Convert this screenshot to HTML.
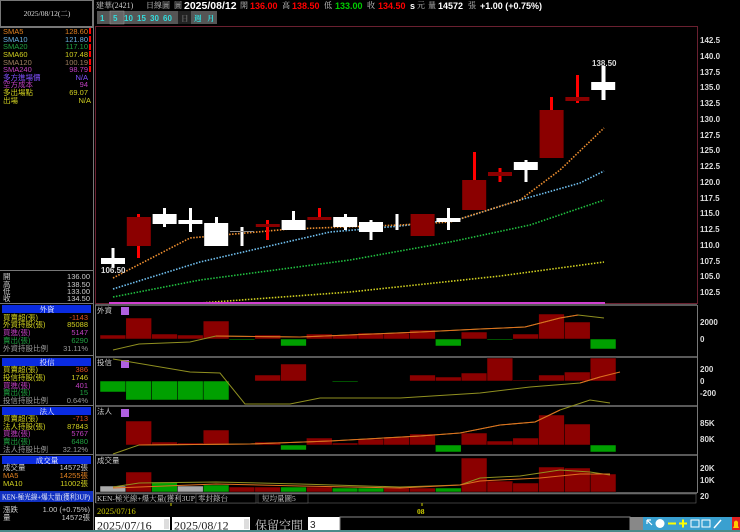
<!DOCTYPE html>
<html><head><meta charset="utf-8"><style>
body{margin:0;background:#000;width:740px;height:532px;overflow:hidden}
svg{display:block}
text{font-family:"Liberation Sans","Noto Sans CJK TC",sans-serif}
.s{font-size:7.5px;font-family:"Liberation Serif","Noto Serif CJK SC",serif}
.ax{font-size:8px;fill:#ddd;font-weight:bold}
</style></head><body>
<svg width="740" height="532" viewBox="0 0 740 532" xmlns="http://www.w3.org/2000/svg">
<rect width="740" height="532" fill="#000"/>
<!-- left panel -->
<rect x="0.5" y="0.5" width="92" height="26" fill="#000" stroke="#777"/>
<text x="47" y="16" class="s" fill="#ddd" text-anchor="middle">2025/08/12(二)</text>
<line x1="93.5" y1="0" x2="93.5" y2="532" stroke="#777"/>
<line x1="0" y1="27.5" x2="93" y2="27.5" stroke="#777"/>
<g class="s">
<text x="3" y="34" fill="#e08020">SMA5</text><text x="88" y="34" fill="#e08020" text-anchor="end">128.60</text>
<text x="3" y="42" fill="#6ab0e0">SMA10</text><text x="88" y="42" fill="#6ab0e0" text-anchor="end">121.80</text>
<text x="3" y="49" fill="#20a040">SMA20</text><text x="88" y="49" fill="#20a040" text-anchor="end">117.10</text>
<text x="3" y="57" fill="#d0d020">SMA60</text><text x="88" y="57" fill="#d0d020" text-anchor="end">107.48</text>
<text x="3" y="65" fill="#a08060">SMA120</text><text x="88" y="65" fill="#a08060" text-anchor="end">100.19</text>
<text x="3" y="72" fill="#c040c0">SMA240</text><text x="88" y="72" fill="#c040c0" text-anchor="end">98.79</text>
<text x="3" y="80" fill="#8050ff">多方進場價</text><text x="88" y="80" fill="#8050ff" text-anchor="end">N/A</text>
<text x="3" y="87" fill="#c040c0">空方成本</text><text x="88" y="87" fill="#c040c0" text-anchor="end">94</text>
<text x="3" y="95" fill="#d0d020">多出場點</text><text x="88" y="95" fill="#d0d020" text-anchor="end">69.07</text>
<text x="3" y="103" fill="#d0d020">出場</text><text x="91" y="103" fill="#d0d020" text-anchor="end">N/A</text>
</g>
<g fill="#f00"><rect x="89" y="28" width="2" height="6"/><rect x="89" y="36" width="2" height="6"/><rect x="89" y="44" width="2" height="6"/><rect x="89" y="51" width="2" height="6"/><rect x="89" y="59" width="2" height="6"/><rect x="89" y="66" width="2" height="6"/></g>
<line x1="0" y1="270.5" x2="93" y2="270.5" stroke="#777"/>
<g class="s" fill="#ccc">
<text x="3" y="279">開</text><text x="90" y="279" text-anchor="end">136.00</text>
<text x="3" y="287">高</text><text x="90" y="287" text-anchor="end">138.50</text>
<text x="3" y="294">低</text><text x="90" y="294" text-anchor="end">133.00</text>
<text x="3" y="301">收</text><text x="90" y="301" text-anchor="end">134.50</text>
</g>
<line x1="0" y1="303.5" x2="93" y2="303.5" stroke="#777"/>
<rect x="2" y="305" width="89" height="8" fill="#0a2be0"/><text x="47" y="312" class="s" fill="#fff" text-anchor="middle">外資</text>
<g class="s">
<text x="3" y="320" fill="#d0d020">買賣超(張)</text><text x="88" y="320" fill="#e05020" text-anchor="end">-1143</text>
<text x="3" y="327" fill="#d0d020">外資持股(張)</text><text x="88" y="327" fill="#d0d020" text-anchor="end">85088</text>
<text x="3" y="335" fill="#c040c0">買進(張)</text><text x="88" y="335" fill="#c040c0" text-anchor="end">5147</text>
<text x="3" y="343" fill="#20a040">賣出(張)</text><text x="88" y="343" fill="#20a040" text-anchor="end">6290</text>
<text x="3" y="351" fill="#999">外資持股比例</text><text x="88" y="351" fill="#999" text-anchor="end">31.11%</text>
</g>
<line x1="0" y1="355.5" x2="93" y2="355.5" stroke="#777"/>
<rect x="2" y="358" width="89" height="8" fill="#0a2be0"/><text x="47" y="365" class="s" fill="#fff" text-anchor="middle">投信</text>
<g class="s">
<text x="3" y="372" fill="#d0d020">買賣超(張)</text><text x="88" y="372" fill="#e05020" text-anchor="end">386</text>
<text x="3" y="380" fill="#d0d020">投信持股(張)</text><text x="88" y="380" fill="#d0d020" text-anchor="end">1746</text>
<text x="3" y="388" fill="#c040c0">買進(張)</text><text x="88" y="388" fill="#c040c0" text-anchor="end">401</text>
<text x="3" y="395" fill="#20a040">賣出(張)</text><text x="88" y="395" fill="#20a040" text-anchor="end">15</text>
<text x="3" y="403" fill="#999">投信持股比例</text><text x="88" y="403" fill="#999" text-anchor="end">0.64%</text>
</g>
<line x1="0" y1="405.5" x2="93" y2="405.5" stroke="#777"/>
<rect x="2" y="407" width="89" height="8" fill="#0a2be0"/><text x="47" y="414" class="s" fill="#fff" text-anchor="middle">法人</text>
<g class="s">
<text x="3" y="421" fill="#d0d020">買賣超(張)</text><text x="88" y="421" fill="#e05020" text-anchor="end">-713</text>
<text x="3" y="429" fill="#d0d020">法人持股(張)</text><text x="88" y="429" fill="#d0d020" text-anchor="end">87843</text>
<text x="3" y="436" fill="#c040c0">買進(張)</text><text x="88" y="436" fill="#c040c0" text-anchor="end">5767</text>
<text x="3" y="444" fill="#20a040">賣出(張)</text><text x="88" y="444" fill="#20a040" text-anchor="end">6480</text>
<text x="3" y="452" fill="#999">法人持股比例</text><text x="88" y="452" fill="#999" text-anchor="end">32.12%</text>
</g>
<line x1="0" y1="454.5" x2="93" y2="454.5" stroke="#777"/>
<rect x="2" y="456" width="89" height="8" fill="#0a2be0"/><text x="47" y="463" class="s" fill="#fff" text-anchor="middle">成交量</text>
<g class="s">
<text x="3" y="470" fill="#ccc">成交量</text><text x="88" y="470" fill="#ccc" text-anchor="end">14572張</text>
<text x="3" y="478" fill="#e08020">MA5</text><text x="88" y="478" fill="#e08020" text-anchor="end">14255張</text>
<text x="3" y="486" fill="#d0d020">MA10</text><text x="88" y="486" fill="#d0d020" text-anchor="end">11002張</text>
</g>
<rect x="0" y="491" width="93" height="11" fill="#1030c0"/><text x="2" y="499.5" class="s" fill="#fff" textLength="88" lengthAdjust="spacingAndGlyphs">KEN-極光線+爆大量(獲利3UP)</text>
<g class="s" fill="#ccc"><text x="3" y="512">漲跌</text><text x="90" y="512" text-anchor="end">1.00 (+0.75%)</text>
<text x="3" y="520">量</text><text x="90" y="520" text-anchor="end">14572張</text></g>
<!-- header -->
<g style="font-size:9px">
<text x="96" y="8" fill="#ccc" class="s" style="font-size:8px">建華(2421)</text>
<text x="146" y="8" fill="#ccc" class="s" style="font-size:8px">日線圖</text>
<text x="174" y="8" fill="#ccc" class="s" style="font-size:8px">圖</text>
<text x="184" y="9" fill="#fff" font-weight="bold" style="font-size:10.5px">2025/08/12</text>
<text x="240" y="8" fill="#ccc" class="s" style="font-size:8px">開</text><text x="250" y="9" fill="#f00" font-weight="bold">136.00</text>
<text x="282" y="8" fill="#ccc" class="s" style="font-size:8px">高</text><text x="292" y="9" fill="#f00" font-weight="bold">138.50</text>
<text x="324" y="8" fill="#ccc" class="s" style="font-size:8px">低</text><text x="335" y="9" fill="#0c0" font-weight="bold">133.00</text>
<text x="367" y="8" fill="#ccc" class="s" style="font-size:8px">收</text><text x="378" y="9" fill="#f00" font-weight="bold">134.50</text>
<text x="410" y="9" fill="#fff" font-weight="bold">s</text><text x="417" y="8" fill="#ccc" class="s" style="font-size:8px">元</text>
<text x="428" y="8" fill="#ccc" class="s" style="font-size:8px">量</text><text x="438" y="9" fill="#fff" font-weight="bold">14572</text>
<text x="468" y="8" fill="#ccc" class="s" style="font-size:8px">張</text>
<text x="480" y="9" fill="#fff" font-weight="bold">+1.00 (+0.75%)</text>
</g>
<g font-size="8" font-weight="bold" fill="#3dd">
<rect x="97" y="11" width="120" height="13" fill="#555"/>
<rect x="110" y="11" width="14" height="13" fill="#666" stroke="#999" stroke-width="0.5"/>
<rect x="178" y="11" width="13" height="13" fill="#222"/>
<text x="100" y="21">1</text><text x="113" y="21">5</text><text x="124" y="21">10</text><text x="137" y="21">15</text><text x="150" y="21">30</text><text x="163" y="21">60</text>
<text x="181" y="21" fill="#666" class="s">日</text><text x="194" y="21" class="s">週</text><text x="207" y="21" class="s">月</text>
</g>
<rect x="95.5" y="26.5" width="602" height="277" fill="none" stroke="#6a2030"/>
<g class="ax">
<text x="700" y="43">142.5</text><text x="700" y="59">140.0</text><text x="700" y="75">137.5</text><text x="700" y="90">135.0</text><text x="700" y="106">132.5</text><text x="700" y="122">130.0</text><text x="700" y="138">127.5</text><text x="700" y="153">125.0</text><text x="700" y="169">122.5</text><text x="700" y="185">120.0</text><text x="700" y="201">117.5</text><text x="700" y="216">115.0</text><text x="700" y="232">112.5</text><text x="700" y="248">110.0</text><text x="700" y="264">107.5</text><text x="700" y="279">105.0</text><text x="700" y="295">102.5</text>
</g>
<g fill="none" stroke-width="1.6" stroke-dasharray="1.5 1.5">
<polyline stroke="#d0d020" points="200,303 350,292 500,276 604,262"/>
<polyline stroke="#20c040" points="113,297 200,280 350,260 450,242 530,225 604,200"/>
<polyline stroke="#70c0f0" points="113,289 200,262 330,232 400,226 460,219 520,200 580,183 604,171"/>
<polyline stroke="#f09030" points="113,278 190,238 290,229 400,225 450,222 520,200 560,170 604,128"/>
</g>
<rect x="109" y="302" width="496" height="2" fill="#d040d0"/>
<g>
<rect x="111.5" y="248" width="3" height="20" fill="#fff"/><rect x="101" y="258" width="24" height="6" fill="#fff"/>
<rect x="137" y="214" width="3" height="44" fill="#f00"/><rect x="126.8" y="217" width="24" height="29" fill="#8b0000"/>
<rect x="163" y="208" width="3" height="19" fill="#fff"/><rect x="152.6" y="214" width="24" height="10" fill="#fff"/>
<rect x="189" y="208" width="3" height="24" fill="#fff"/><rect x="178.4" y="220" width="24" height="4" fill="#fff"/>
<rect x="215" y="217" width="3" height="29" fill="#fff"/><rect x="204.2" y="223" width="24" height="23" fill="#fff"/>
<rect x="240.5" y="227" width="3" height="19" fill="#fff"/><rect x="230" y="231" width="24" height="1" fill="#888"/>
<rect x="266" y="220" width="3" height="20" fill="#f00"/><rect x="255.8" y="224" width="24" height="3" fill="#8b0000"/>
<rect x="292" y="211" width="3" height="19" fill="#fff"/><rect x="281.6" y="220" width="24" height="10" fill="#fff"/>
<rect x="318" y="208" width="3" height="10" fill="#f00"/><rect x="307.4" y="217" width="24" height="3" fill="#8b0000"/>
<rect x="344" y="214" width="3" height="16" fill="#fff"/><rect x="333.2" y="217" width="24" height="10" fill="#fff"/>
<rect x="369.5" y="220" width="3" height="20" fill="#fff"/><rect x="359" y="222" width="24" height="10" fill="#fff"/>
<rect x="395.5" y="214" width="3" height="16" fill="#fff"/>
<rect x="410.6" y="214" width="24" height="22" fill="#8b0000"/>
<rect x="447" y="208" width="3" height="22" fill="#fff"/><rect x="436.4" y="218" width="24" height="4" fill="#fff"/>
<rect x="473" y="152" width="3" height="58" fill="#f00"/><rect x="462.2" y="180" width="24" height="30" fill="#8b0000"/>
<rect x="498.5" y="168" width="3" height="14" fill="#f00"/><rect x="488" y="172" width="24" height="4" fill="#8b0000"/>
<rect x="524.5" y="160" width="3" height="22" fill="#fff"/><rect x="513.8" y="162" width="24" height="8" fill="#fff"/>
<rect x="550" y="97" width="3" height="61" fill="#f00"/><rect x="539.6" y="110" width="24" height="48" fill="#8b0000"/>
<rect x="576" y="75" width="3" height="28" fill="#f00"/><rect x="565.4" y="97" width="24" height="4" fill="#8b0000"/>
<rect x="601.5" y="66" width="4" height="34" fill="#fff"/><rect x="591.2" y="82" width="24" height="8" fill="#fff"/>
</g>
<text x="592" y="66" class="ax" fill="#fff">138.50</text>
<text x="101" y="273" class="ax" fill="#fff">106.50</text>
<g stroke="#777" stroke-width="1.5"><line x1="95" y1="305" x2="697" y2="305"/><line x1="95" y1="357" x2="697" y2="357"/><line x1="95" y1="406" x2="697" y2="406"/><line x1="95" y1="455" x2="697" y2="455"/><line x1="95" y1="493" x2="697" y2="493"/></g>
<line x1="95.5" y1="305" x2="95.5" y2="503" stroke="#777"/><line x1="697.5" y1="305" x2="697.5" y2="493" stroke="#777"/>
<g class="s" fill="#ccc"><text x="97" y="313">外資</text><text x="97" y="365">投信</text><text x="97" y="414">法人</text><text x="97" y="463">成交量</text></g>
<g fill="#b060e0"><rect x="121" y="307" width="8" height="8"/><rect x="121" y="360" width="8" height="8"/><rect x="121" y="409" width="8" height="8"/></g>
<g class="ax"><text x="700" y="325">2000</text><text x="700" y="342">0</text><text x="700" y="372">200</text><text x="700" y="384">0</text><text x="700" y="396">-200</text><text x="700" y="426">85K</text><text x="700" y="442">80K</text><text x="700" y="471">20K</text><text x="700" y="483">10K</text><text x="700" y="499">20</text></g>
<g stroke="#000" stroke-width="0.5">
<g fill="#8b0000"><rect x="100" y="335" width="25.8" height="4"/><rect x="125.8" y="318" width="25.8" height="21"/><rect x="151.6" y="334" width="25.8" height="5"/><rect x="177.4" y="335" width="25.8" height="4"/><rect x="203.2" y="321" width="25.8" height="18"/><rect x="254.8" y="335" width="25.8" height="4"/><rect x="306.4" y="334" width="25.8" height="5"/><rect x="332.2" y="335" width="25.8" height="4"/><rect x="358" y="333" width="25.8" height="6"/><rect x="383.8" y="333" width="25.8" height="6"/><rect x="409.6" y="330" width="25.8" height="9"/><rect x="461.2" y="332" width="25.8" height="7"/><rect x="512.8" y="334" width="25.8" height="5"/><rect x="538.6" y="314" width="25.8" height="25"/><rect x="564.4" y="322" width="25.8" height="17"/></g>
<g fill="#00a000"><rect x="229" y="339" width="25.8" height="1"/><rect x="280.6" y="339" width="25.8" height="7"/><rect x="435.4" y="339" width="25.8" height="7"/><rect x="487" y="339" width="25.8" height="1"/><rect x="590.2" y="339" width="25.8" height="10"/></g>
<g fill="#00a000"><rect x="100" y="381" width="25.8" height="11"/><rect x="125.8" y="381" width="25.8" height="19"/><rect x="151.6" y="381" width="25.8" height="19"/><rect x="177.4" y="381" width="25.8" height="19"/><rect x="203.2" y="381" width="25.8" height="19"/><rect x="332.2" y="381" width="25.8" height="1"/></g>
<g fill="#8b0000"><rect x="254.8" y="375" width="25.8" height="6"/><rect x="280.6" y="364" width="25.8" height="17"/><rect x="409.6" y="375" width="25.8" height="6"/><rect x="435.4" y="377" width="25.8" height="4"/><rect x="461.2" y="373" width="25.8" height="8"/><rect x="487" y="358" width="25.8" height="23"/><rect x="512.8" y="380" width="25.8" height="1"/><rect x="538.6" y="375" width="25.8" height="6"/><rect x="564.4" y="372" width="25.8" height="9"/><rect x="590.2" y="358" width="25.8" height="23"/></g>
<g fill="#8b0000"><rect x="125.8" y="421" width="25.8" height="24"/><rect x="151.6" y="442" width="25.8" height="3"/><rect x="177.4" y="443" width="25.8" height="2"/><rect x="203.2" y="430" width="25.8" height="15"/><rect x="254.8" y="442" width="25.8" height="3"/><rect x="306.4" y="438" width="25.8" height="7"/><rect x="332.2" y="443" width="25.8" height="2"/><rect x="358" y="439" width="25.8" height="6"/><rect x="383.8" y="437" width="25.8" height="8"/><rect x="409.6" y="434" width="25.8" height="11"/><rect x="461.2" y="433" width="25.8" height="12"/><rect x="487" y="441" width="25.8" height="4"/><rect x="512.8" y="438" width="25.8" height="7"/><rect x="538.6" y="415" width="25.8" height="30"/><rect x="564.4" y="424" width="25.8" height="21"/></g>
<g fill="#00a000"><rect x="280.6" y="445" width="25.8" height="5"/><rect x="435.4" y="445" width="25.8" height="7"/><rect x="590.2" y="445" width="25.8" height="7"/></g>
<g fill="#8b0000"><rect x="125.8" y="472" width="25.8" height="20"/><rect x="229" y="487" width="25.8" height="5"/><rect x="254.8" y="487" width="25.8" height="5"/><rect x="306.4" y="487" width="25.8" height="5"/><rect x="383.8" y="488" width="25.8" height="4"/><rect x="409.6" y="488" width="25.8" height="4"/><rect x="461.2" y="458" width="25.8" height="34"/><rect x="487" y="481" width="25.8" height="11"/><rect x="512.8" y="483" width="25.8" height="9"/><rect x="538.6" y="467" width="25.8" height="25"/><rect x="564.4" y="468" width="25.8" height="24"/><rect x="590.2" y="474" width="25.8" height="18"/></g>
<g fill="#00a000"><rect x="151.6" y="482" width="25.8" height="10"/><rect x="203.2" y="485" width="25.8" height="7"/><rect x="280.6" y="487" width="25.8" height="5"/><rect x="332.2" y="488" width="25.8" height="4"/><rect x="358" y="488" width="25.8" height="4"/><rect x="435.4" y="488" width="25.8" height="4"/></g>
<g fill="#aaa"><rect x="100" y="486" width="25.8" height="6"/><rect x="177.4" y="486" width="25.8" height="6"/></g>
</g>
<g fill="none" stroke-width="1">
<polyline stroke="#909020" points="113,350 139,344 190,342 216,336 300,337 420,332 480,329 525,327 560,318 578,315 604,318"/>
<polyline stroke="#e07020" points="216,336 300,337 420,332 480,329 525,327 560,318 578,315"/>
<polyline stroke="#909020" points="113,359 190,372 220,373 245,404 290,404 320,398 400,398 480,393 530,387 580,383 600,377"/>
<polyline stroke="#e07020" points="580,383 600,377 620,372"/>
<polyline stroke="#909020" points="113,454 139,445 250,444 330,441 420,436 460,433 500,425 535,422 560,410 590,400 610,403"/>
<polyline stroke="#e07020" points="139,445 250,444 330,441 420,436 460,433 500,425 535,422 560,410"/>
<polyline stroke="#909020" points="113,487 139,483 216,482 300,484 400,487 460,485 480,478 520,476 560,470 590,472 610,475"/>
<polyline stroke="#e07020" points="113,488 216,484 300,486 400,488 460,485 480,481 540,478 580,474 610,474"/>
</g>
<rect x="96" y="494" width="600" height="9" fill="#000" stroke="#777" stroke-width="0.5"/>
<text x="97" y="501" class="s" fill="#ccc">KEN-極光線+爆大量(獲利3UP)</text>
<rect x="196" y="494" width="60" height="9" fill="#000" stroke="#777" stroke-width="0.5"/><text x="198" y="501" class="s" fill="#ccc">零封錄台</text>
<rect x="258" y="494" width="50" height="9" fill="#000" stroke="#777" stroke-width="0.5"/><text x="262" y="501" class="s" fill="#ccc">短均量圖5</text>
<line x1="171" y1="503" x2="171" y2="506" stroke="#cc0"/><text x="97" y="514" class="s" fill="#cc0" style="font-size:8.5px">2025/07/16</text>
<line x1="422" y1="503" x2="422" y2="506" stroke="#cc0"/><text x="417" y="514" class="s" fill="#cc0" font-weight="bold">08</text>
<rect x="95" y="517" width="75" height="14" fill="#fff"/><text x="97" y="529.5" fill="#222" class="s" style="font-size:12px">2025/07/16</text><rect x="164" y="519" width="5" height="10" fill="#ddd"/>
<text x="173" y="528" fill="#ccc" style="font-size:9px">~</text>
<rect x="172" y="517" width="78" height="14" fill="#fff"/><text x="174" y="529.5" fill="#222" class="s" style="font-size:12px">2025/08/12</text><rect x="244" y="519" width="5" height="10" fill="#ddd"/>
<text x="255" y="529.5" fill="#ccc" class="s" style="font-size:12px">保留空間</text>
<rect x="308" y="517" width="32" height="14" fill="#fff"/><text x="310" y="528" fill="#222" style="font-size:10px">3</text>
<rect x="340" y="517" width="290" height="14" fill="#000" stroke="#888" stroke-width="1"/>
<rect x="630" y="517" width="13" height="13" fill="#888"/>
<rect x="643" y="517" width="89" height="13" fill="#3aa0d0"/>
<g fill="#fff" stroke="#fff">
<path d="M647 520 L652 525 M647 520 L647 524 M647 520 L651 520" fill="none" stroke-width="1.2"/>
<circle cx="660" cy="523.5" r="4.5" stroke="none"/>
<rect x="668" y="522.5" width="8" height="2" fill="#ff0" stroke="none"/>
<rect x="679" y="522.5" width="8" height="2" fill="#ff0" stroke="none"/><rect x="682" y="519.5" width="2" height="8" fill="#ff0" stroke="none"/>
<rect x="691" y="520" width="8" height="7" fill="none" stroke-width="1"/>
<rect x="702" y="520" width="8" height="7" fill="none" stroke-width="1"/>
<path d="M714 528 L721 520" stroke-width="1.5"/>
</g>
<rect x="732" y="517" width="8" height="13" fill="#e02020"/><path d="M733 528 L739 528 L738 526 L738 522 Q736 519 734 522 L734 526 Z" fill="#ffcc00"/>
<rect x="0" y="530" width="740" height="2" fill="#4a8a8a"/>
</svg>
</body></html>
